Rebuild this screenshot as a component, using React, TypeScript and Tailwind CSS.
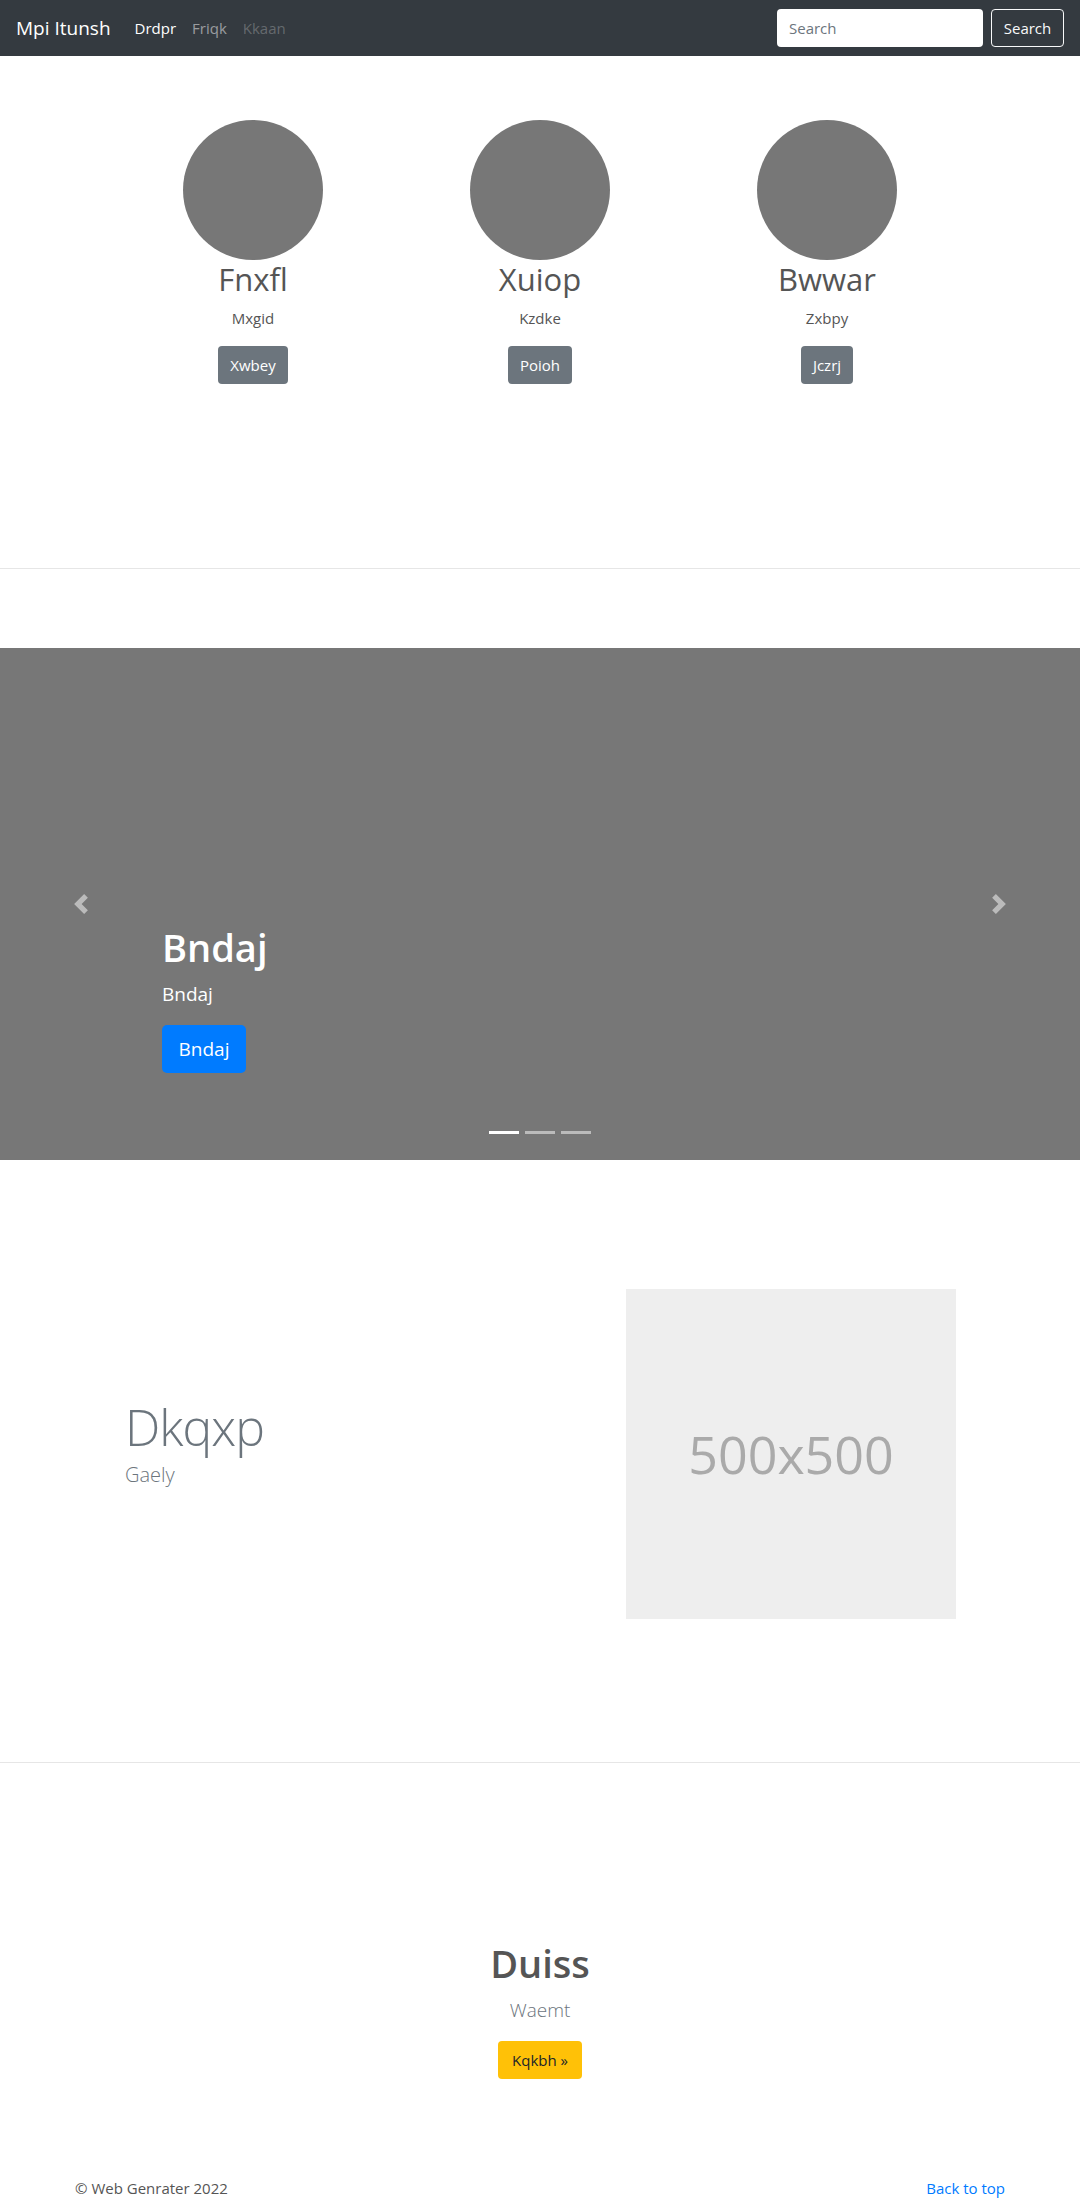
import React from 'react';

type Member = {
  name: string;
  role: string;
  action: string;
};

const members: Member[] = [
  { name: 'Fnxfl', role: 'Mxgid', action: 'Xwbey' },
  { name: 'Xuiop', role: 'Kzdke', action: 'Poioh' },
  { name: 'Bwwar', role: 'Zxbpy', action: 'Jczrj' },
];

const font = { fontFamily: '"Open Sans", "Noto Sans", sans-serif' };

const Navbar: React.FC = () => {
  return (
    <nav className="h-14 bg-[#343a40] flex items-center px-4">
      <span className="text-[19px] text-white mr-4 leading-[30px]">Mpi Itunsh</span>
      <ul className="flex items-center text-[15px]">
        <li className="px-2 text-white">Drdpr</li>
        <li className="px-2 text-white/50">Friqk</li>
        <li className="px-2 text-white/25">Kkaan</li>
      </ul>
      <form className="ml-auto flex items-center">
        <input
          type="text"
          placeholder="Search"
          className="w-[206px] h-[38px] bg-white rounded-[4px] px-3 text-[15px] text-[#495057] placeholder:text-[#6c757d] outline-none mr-2"
        />
        <button
          type="button"
          className="h-[38px] w-[73px] rounded-[4px] border border-[#f8f9fa] text-[#f8f9fa] text-[15px]"
        >
          Search
        </button>
      </form>
    </nav>
  );
};

const Chevron: React.FC<{ flip?: boolean }> = ({ flip }) => (
  <svg width="20" height="20" viewBox="0 0 8 8" className={flip ? 'rotate-180' : ''}>
    <path fill="#fff" d="M5.25 0l-4 4 4 4 1.5-1.5-2.5-2.5 2.5-2.5-1.5-1.5z" />
  </svg>
);

const Carousel: React.FC = () => {
  return (
    <div className="relative h-[512px] bg-[#777]">
      <div className="absolute left-0 top-0 bottom-0 w-[15%] flex items-center justify-center opacity-50">
        <Chevron />
      </div>
      <div className="absolute right-0 top-0 bottom-0 w-[15%] flex items-center justify-center opacity-50">
        <Chevron flip />
      </div>
      <div className="absolute left-[15%] right-[15%] bottom-[48px] pb-[20px] text-white">
        <h1 className="text-[38px] font-semibold leading-[48px] mb-2">Bndaj</h1>
        <p className="text-[19px] leading-[30px] mb-4">Bndaj</p>
        <div className="mb-[19px]">
          <button className="h-[48px] w-[84px] rounded-[5px] bg-[#007bff] text-white text-[19px]">Bndaj</button>
        </div>
      </div>
      <div className="absolute bottom-[26px] left-0 right-0 flex justify-center gap-[6px]">
        <span className="w-[30px] h-[3px] bg-white" />
        <span className="w-[30px] h-[3px] bg-white/50" />
        <span className="w-[30px] h-[3px] bg-white/50" />
      </div>
    </div>
  );
};

const App: React.FC = () => {
  return (
    <div className="bg-white text-[#555] min-h-[2200px]" style={font}>
      <Navbar />

      <section className="pt-16">
        <div className="w-[861px] mx-auto grid grid-cols-3">
          {members.map((m) => (
            <div key={m.name} className="flex flex-col items-center text-center">
              <div className="w-[140px] h-[140px] rounded-full bg-[#777]" />
              <h2 className="text-[31px] leading-[38px] mb-2">{m.name}</h2>
              <p className="text-[15px] leading-[24px] mb-4">{m.role}</p>
              <button className="h-[38px] px-3 rounded-[4px] bg-[#6c757d] text-white text-[15px]">{m.action}</button>
            </div>
          ))}
        </div>
      </section>

      <hr className="mt-[184px] border-0 border-t border-[#e6e6e6]" />

      <div className="mt-[79px]">
        <Carousel />
      </div>

      <section className="mt-[129px]">
        <div className="w-[960px] mx-auto flex items-center">
          <div className="flex-1 pl-[65px]">
            <h2 className="text-[50px] font-light leading-[50px] tracking-[-1px] text-[#6c757d] mb-2">Dkqxp</h2>
            <p className="text-[20px] font-light leading-[30px] text-[#6c757d] mb-4">Gaely</p>
          </div>
          <div className="w-[330px] h-[330px] mr-[64px] bg-[#eee] flex items-center justify-center">
            <span className="text-[52px] text-[#aaa]">500x500</span>
          </div>
        </div>
      </section>

      <hr className="mt-[143px] border-0 border-t border-[#e6e6e6]" />

      <section className="pt-[176px] text-center">
        <h1 className="text-[38px] font-semibold leading-[48px] mb-2">Duiss</h1>
        <p className="text-[19px] font-light leading-[30px] text-[#6c757d] mb-4">Waemt</p>
        <button className="h-[38px] w-[84px] rounded-[4px] bg-[#ffc107] text-[#212529] text-[15px]">Kqkbh »</button>
      </section>

      <footer className="w-[930px] mx-auto mt-[97px] flex justify-between text-[15px] leading-[24px]">
        <p>© Web Genrater 2022</p>
        <a href="#" className="text-[#007bff]">Back to top</a>
      </footer>
    </div>
  );
};

export default App;
